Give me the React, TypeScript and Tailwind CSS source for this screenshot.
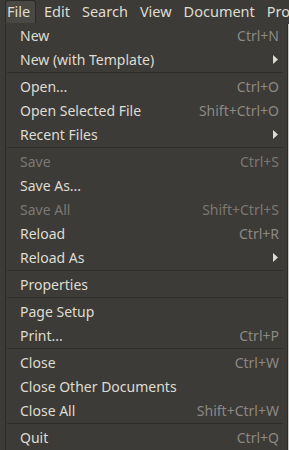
import React from 'react';

type Item =
  | { kind: 'sep' }
  | { kind: 'item'; label: string; shortcut?: string; submenu?: boolean; disabled?: boolean };

const items: Item[] = [
  { kind: 'item', label: 'New', shortcut: 'Ctrl+N' },
  { kind: 'item', label: 'New (with Template)', submenu: true },
  { kind: 'sep' },
  { kind: 'item', label: 'Open...', shortcut: 'Ctrl+O' },
  { kind: 'item', label: 'Open Selected File', shortcut: 'Shift+Ctrl+O' },
  { kind: 'item', label: 'Recent Files', submenu: true },
  { kind: 'sep' },
  { kind: 'item', label: 'Save', shortcut: 'Ctrl+S', disabled: true },
  { kind: 'item', label: 'Save As...' },
  { kind: 'item', label: 'Save All', shortcut: 'Shift+Ctrl+S', disabled: true },
  { kind: 'item', label: 'Reload', shortcut: 'Ctrl+R' },
  { kind: 'item', label: 'Reload As', submenu: true },
  { kind: 'sep' },
  { kind: 'item', label: 'Properties' },
  { kind: 'sep' },
  { kind: 'item', label: 'Page Setup' },
  { kind: 'item', label: 'Print...', shortcut: 'Ctrl+P' },
  { kind: 'sep' },
  { kind: 'item', label: 'Close', shortcut: 'Ctrl+W' },
  { kind: 'item', label: 'Close Other Documents' },
  { kind: 'item', label: 'Close All', shortcut: 'Shift+Ctrl+W' },
  { kind: 'sep' },
  { kind: 'item', label: 'Quit', shortcut: 'Ctrl+Q' },
];

const menus = ['Edit', 'Search', 'View', 'Document', 'Project'];

const App: React.FC = () => {
  return (
    <div
      className="w-[289px] h-[450px] overflow-hidden bg-[#3c3b37] text-[#dfdbd2] text-[14px]"
      style={{ fontFamily: '"Noto Sans", "DejaVu Sans", sans-serif' }}
    >
      {/* menubar */}
      <div className="flex h-[24px] items-stretch whitespace-nowrap overflow-hidden text-[14.5px]">
        <div className="ml-[5px] w-[31px] h-[23px] shrink-0 rounded-t-[3px] border border-b-0 border-[#2b2a26] bg-[#4a4842] flex items-center pl-[1px] pb-[1px]">
          File
        </div>
        <div className="w-[2px] shrink-0" />
        {menus.map((m) => (
          <div key={m} className="px-[6px] flex items-center pb-[1px] shrink-0">
            {m}
          </div>
        ))}
      </div>

      {/* file menu */}
      <div className="flex">
        <div className="ml-[5px] w-[283px] border-x border-[#2b2a26] bg-[#3c3b37]">
          {items.map((it, i) =>
            it.kind === 'sep' ? (
              <div key={i} className="h-[3px] ml-[1px] mr-[4px] border-t border-[#2f2e2a]" />
            ) : (
              <div
                key={i}
                className={`h-[24px] flex items-center justify-between pl-[14px] pr-[8px] pb-[2px] ${
                  it.disabled ? 'text-[#7b7872]' : 'text-[#dfdbd2]'
                }`}
              >
                <span>{it.label}</span>
                {it.shortcut && (
                  <span className={it.disabled ? 'text-[#7b7872]' : 'text-[#8c8983]'}>{it.shortcut}</span>
                )}
                {it.submenu && (
                  <svg width="5" height="9" viewBox="0 0 5 9" className="mr-[1px]">
                    <path d="M0 0 L5 4.5 L0 9 Z" fill="#dfdbd2" />
                  </svg>
                )}
              </div>
            )
          )}
        </div>
        <div className="flex-1 bg-[#c8c6c2]" />
      </div>
    </div>
  );
};

export default App;
